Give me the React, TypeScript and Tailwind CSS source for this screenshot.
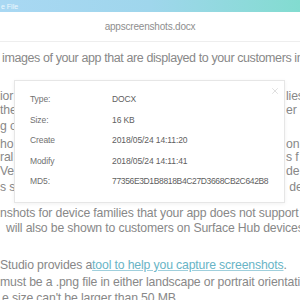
import { X } from 'lucide-react';

const info = [
  { label: 'Type:', value: 'DOCX' },
  { label: 'Size:', value: '16 KB' },
  { label: 'Create', value: '2018/05/24 14:11:20' },
  { label: 'Modify', value: '2018/05/24 14:11:41' },
  { label: 'MD5:', value: '77356E3D1B8818B4C27D3668CB2C642B8', tight: true },
];

// lines of the document that sit behind the dialog: only the edges show
const hidden = [
  { left: 'ior', right: 'lies', h: 'h-[14px]' },
  { left: 'the', right: 'er', h: 'h-[16px]' },
  { left: 'g o', right: '', h: 'h-[18px]' },
  { left: 'ho', right: 'on', h: 'h-[13px]' },
  { left: 'ral;', right: 's f', h: 'h-[14px]' },
  { left: 'Ve', right: 'de', h: 'h-[16px]' },
  { left: 's s', right: ' de', h: 'h-[26px]' },
];

export default function App() {
  return (
    <div className="relative w-[300px] h-[300px] overflow-hidden bg-white font-['Liberation_Sans',sans-serif] text-[#888888]">
      <div className="h-[12px] bg-gradient-to-r from-[#a9d8f3] via-[#9fd6ec] to-[#82dcd0] flex items-center">
        <span className="text-[7px] text-white/80 leading-none pl-[1px]">e File</span>
      </div>

      <div className="h-[30px] flex items-center justify-center border-b border-[#eeeeee]">
        <span className="text-[10px] text-[#8e8e8e] tracking-[-0.2px]">appscreenshots.docx</span>
      </div>

      <div className="pt-[8px] pl-[2px] text-[12.5px] leading-[16px] tracking-[-0.4px] whitespace-nowrap overflow-hidden">
        images of your app that are displayed to your customers in
      </div>

      <div className="mt-[23px] text-[12.25px] tracking-[-0.15px] whitespace-nowrap overflow-hidden">
        {hidden.map((l, i) => (
          <div key={i} className={`${l.h} flex leading-[14px]`}>
            <span className="w-[14px] overflow-hidden">{l.left}</span>
            <span className="ml-auto w-[14px] overflow-hidden whitespace-pre">{l.right}</span>
          </div>
        ))}
        <div className="h-[15px] leading-[14px]">nshots for device families that your app does not support</div>
        <div className="h-[37px] leading-[14px] pl-[6px]">will also be shown to customers on Surface Hub devices.</div>
        <div className="h-[17px] leading-[14px]">
          Studio provides a
          <a className="text-[#68b4c6] underline decoration-[#9fcfdc]">tool to help you capture screenshots</a>.
        </div>
        <div className="h-[16px] leading-[14px]">must be a .png file in either landscape or portrait orientati</div>
        <div className="leading-[14px] pl-[2px]">e size can't be larger than 50 MB.</div>
      </div>

      <div className="absolute left-[14px] top-[80px] w-[271px] h-[123px] bg-white border border-[#e6e6e6] shadow-[0_1px_4px_rgba(0,0,0,0.06)]">
        <X className="absolute right-[4px] top-[5px] text-[#cccccc]" size={10} strokeWidth={1.5} />
        <div className="pt-[12px] pl-[15px] flex flex-col text-[8.5px] leading-[12px] tracking-[-0.1px]">
          {info.map((r) => (
            <div key={r.label} className="h-[20.5px] flex">
              <span className="w-[82px] text-[#707070]">{r.label}</span>
              <span className={r.tight ? 'text-[#606060] tracking-[-0.35px]' : 'text-[#606060]'}>{r.value}</span>
            </div>
          ))}
        </div>
      </div>
    </div>
  );
}
